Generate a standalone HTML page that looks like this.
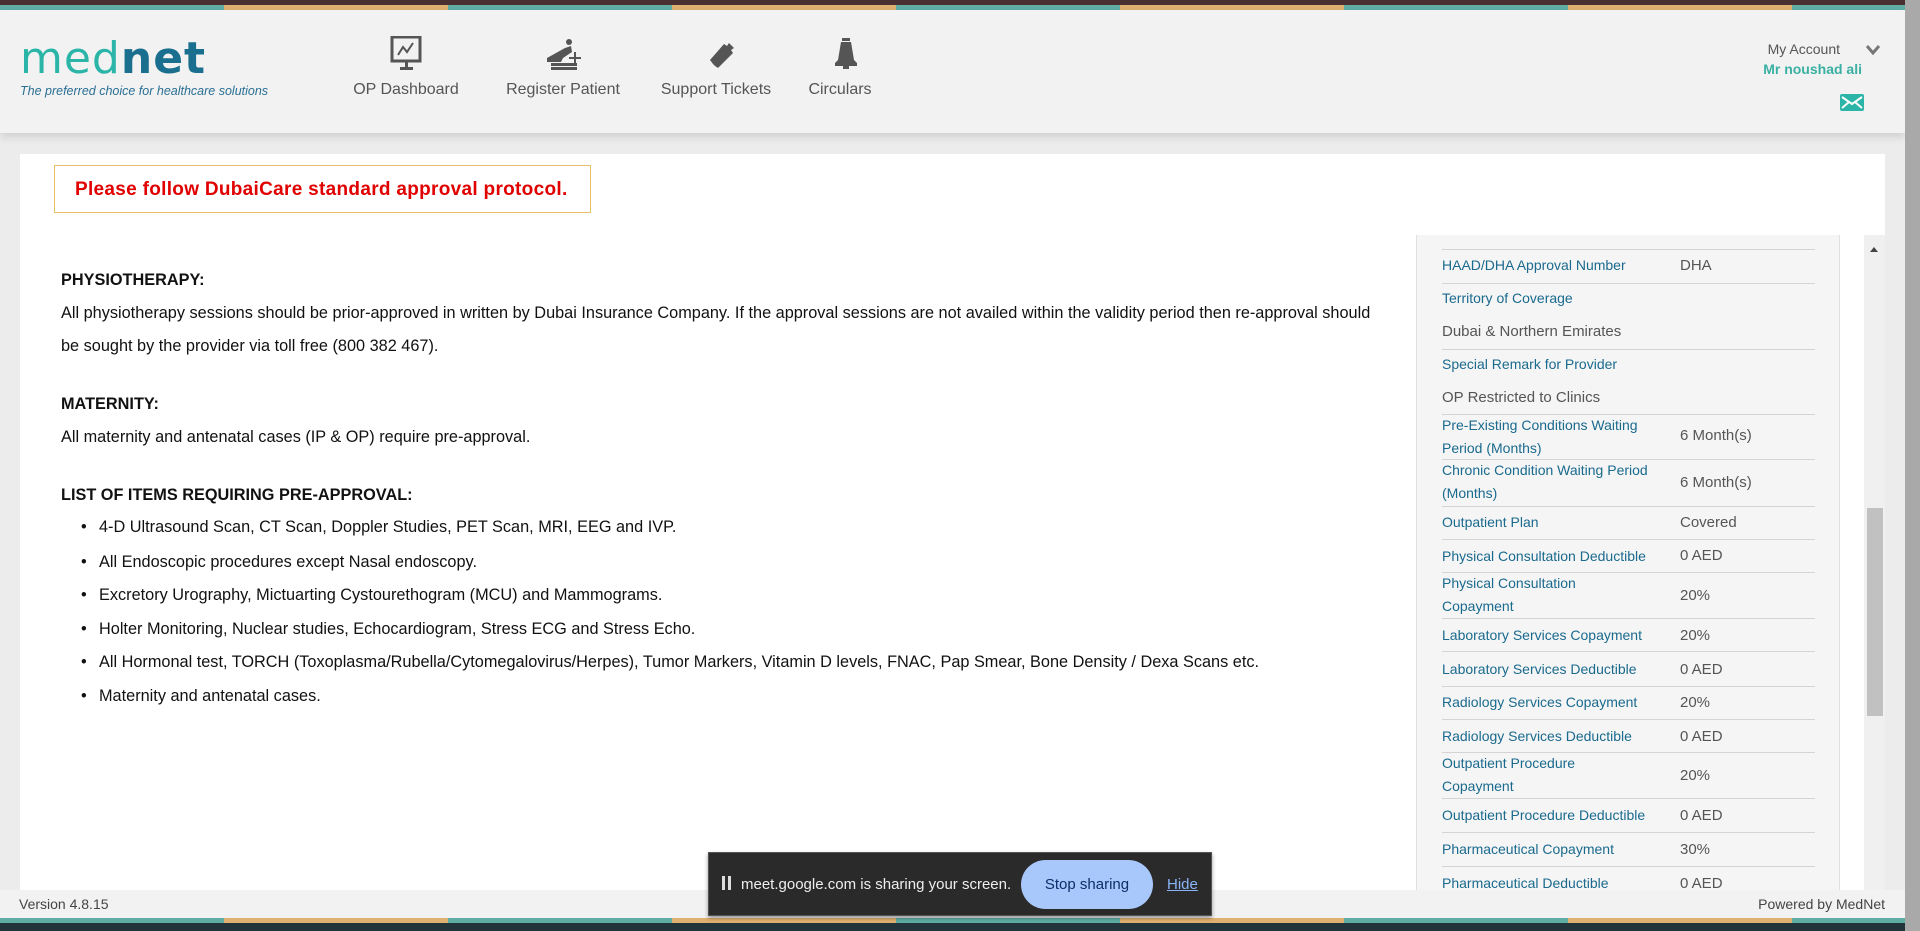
<!DOCTYPE html>
<html><head><meta charset="utf-8"><style>
*{margin:0;padding:0;box-sizing:border-box}
body{width:1920px;height:931px;overflow:hidden;background:#ececec;font-family:"Liberation Sans",Arial,sans-serif;position:relative}
.a{position:absolute;white-space:nowrap}
.stripe{position:absolute;left:0;width:1905px;height:5px;background:repeating-linear-gradient(90deg,#5fada5 0 224px,#e0b070 224px 448px)}
.nav{position:absolute;top:81px;font-size:16px;color:#555;transform:translateX(-50%)}
.ct{font-size:16.3px;color:#111}
.lb{position:absolute;left:1442px;font-size:14px;color:#1a6a8e;line-height:23px}
.vl{position:absolute;left:1680px;font-size:15px;color:#555}
.sep{position:absolute;left:1442px;width:373px;height:1px;background:#d4d4d4}
</style></head><body>
<div class="a" style="left:0;top:0;width:1920px;height:5px;background:#4a3030"></div>
<div class="stripe" style="top:5px"></div>
<div class="a" style="left:0;top:10px;width:1905px;height:123px;background:#f2f2f2;box-shadow:0 4px 8px rgba(0,0,0,.12)"></div>
<div class="a" style="left:1905px;top:0;width:15px;height:931px;background:#a9a9a9"></div>

<div class="a" style="left:20px;top:34px;font-size:44px;letter-spacing:1px;font-family:'DejaVu Sans',sans-serif;line-height:50px"><span style="color:#2bb5a8">med</span><span style="color:#1a6e8e;font-weight:bold">net</span></div>
<div class="a" style="left:20px;top:84px;font-size:12.5px;font-style:italic;color:#2a6f94">The preferred choice for healthcare solutions</div>

<svg class="a" style="left:390px;top:36px" width="34" height="36" viewBox="0 0 34 36"><rect x="2" y="1" width="28" height="24" fill="none" stroke="#555" stroke-width="3"/><polyline points="8,19 13,11 17,16 23,7" fill="none" stroke="#555" stroke-width="2"/><rect x="15" y="25" width="3" height="7" fill="#555"/><rect x="10" y="31" width="13" height="3" fill="#555"/></svg>
<svg class="a" style="left:545px;top:38px" width="40" height="34" viewBox="0 0 40 34"><circle cx="24" cy="4" r="3" fill="#555"/><path d="M2 20 L20 10 L26 8 L27 14 L18 20 L16 24 L2 24 Z" fill="#555"/><rect x="6" y="25" width="26" height="3" fill="#555"/><rect x="6" y="29" width="26" height="3" fill="#555"/><path d="M30 14v12M24 20h12" stroke="#555" stroke-width="2"/></svg>
<svg class="a" style="left:707px;top:38px" width="32" height="32" viewBox="0 0 32 32"><path d="M3 22 L17 6 L20 8 L22 5 L27 10 L24 12 L26 15 L11 30 L8 28 L6 26 Z" fill="#555"/></svg>
<svg class="a" style="left:833px;top:38px" width="26" height="32" viewBox="0 0 26 32"><rect x="9" y="0" width="8" height="3" fill="#555"/><path d="M8 4 h10 l3 18 l3 3 v3 h-22 v-3 l3 -3 z" fill="#555"/><rect x="10" y="28" width="6" height="3" fill="#555"/></svg>

<div class="nav" style="left:406px">OP Dashboard</div>
<div class="nav" style="left:563px">Register Patient</div>
<div class="nav" style="left:716px">Support Tickets</div>
<div class="nav" style="left:840px">Circulars</div>

<div class="a" style="right:80px;top:41px;font-size:14px;color:#555">My Account</div>
<svg class="a" style="left:1866px;top:44px" width="14" height="12" viewBox="0 0 14 12"><path d="M1 2 L7 9 L13 2" fill="none" stroke="#777" stroke-width="3"/></svg>
<div class="a" style="right:58px;top:61px;font-size:14px;font-weight:bold;color:#3ab0a2">Mr noushad ali</div>
<svg class="a" style="left:1840px;top:94px" width="24" height="17" viewBox="0 0 24 17"><rect width="24" height="17" rx="2" fill="#2bb5a8"/><path d="M2 3 L12 10 L22 3 M2 14 L9 8 M22 14 L15 8" stroke="#fff" stroke-width="2" fill="none"/></svg>

<div class="a" style="left:20px;top:154px;width:1865px;height:736px;background:#fff"></div>
<div class="a" style="left:54px;top:165px;width:537px;height:48px;border:1px solid #e8c06a;background:#fff"></div>
<div class="a" style="left:75px;top:179px;font-size:19px;font-weight:bold;color:#e00000;font-family:'Liberation Sans Narrow','Liberation Sans',sans-serif;letter-spacing:0.3px">Please follow DubaiCare standard approval protocol.</div>

<div class="a ct" style="left:61px;top:271px;font-weight:bold">PHYSIOTHERAPY:</div>
<div class="a ct" style="left:61px;top:304px">All physiotherapy sessions should be prior-approved in written by Dubai Insurance Company. If the approval sessions are not availed within the validity period then re-approval should</div>
<div class="a ct" style="left:61px;top:337px">be sought by the provider via toll free (800 382 467).</div>
<div class="a ct" style="left:61px;top:395px;font-weight:bold">MATERNITY:</div>
<div class="a ct" style="left:61px;top:428px">All maternity and antenatal cases (IP &amp; OP) require pre-approval.</div>
<div class="a ct" style="left:61px;top:486px;font-weight:bold">LIST OF ITEMS REQUIRING PRE-APPROVAL:</div>
<div class="a ct" style="left:81px;top:518px">•</div><div class="a ct" style="left:99px;top:518px">4-D Ultrasound Scan, CT Scan, Doppler Studies, PET Scan, MRI, EEG and IVP.</div>
<div class="a ct" style="left:81px;top:553px">•</div><div class="a ct" style="left:99px;top:553px">All Endoscopic procedures except Nasal endoscopy.</div>
<div class="a ct" style="left:81px;top:586px">•</div><div class="a ct" style="left:99px;top:586px">Excretory Urography, Mictuarting Cystourethogram (MCU) and Mammograms.</div>
<div class="a ct" style="left:81px;top:620px">•</div><div class="a ct" style="left:99px;top:620px">Holter Monitoring, Nuclear studies, Echocardiogram, Stress ECG and Stress Echo.</div>
<div class="a ct" style="left:81px;top:653px">•</div><div class="a ct" style="left:99px;top:653px">All Hormonal test, TORCH (Toxoplasma/Rubella/Cytomegalovirus/Herpes), Tumor Markers, Vitamin D levels, FNAC, Pap Smear, Bone Density / Dexa Scans etc.</div>
<div class="a ct" style="left:81px;top:687px">•</div><div class="a ct" style="left:99px;top:687px">Maternity and antenatal cases.</div>

<div class="a" style="left:1416px;top:235px;width:424px;height:660px;background:#f5f5f5;border-left:1px solid #e0e0e0;border-right:1px solid #e0e0e0;overflow:hidden">
</div>
<div class="a" style="left:1417px;top:235px;width:422px;height:655px;overflow:hidden">
<div style="position:relative;left:-1417px;top:-235px">
<div class="sep" style="top:249px"></div>
<div class="lb" style="top:254px">HAAD/DHA Approval Number</div><div class="vl" style="top:257px">DHA</div>
<div class="sep" style="top:283px"></div>
<div class="lb" style="top:287px">Territory of Coverage</div>
<div class="vl" style="left:1442px;top:323px">Dubai &amp; Northern Emirates</div>
<div class="sep" style="top:349px"></div>
<div class="lb" style="top:353px">Special Remark for Provider</div>
<div class="vl" style="left:1442px;top:389px">OP Restricted to Clinics</div>
<div class="sep" style="top:414px"></div>
<div class="lb" style="top:414px">Pre-Existing Conditions Waiting<br>Period (Months)</div><div class="vl" style="top:427px">6 Month(s)</div>
<div class="sep" style="top:459px"></div>
<div class="lb" style="top:459px">Chronic Condition Waiting Period<br>(Months)</div><div class="vl" style="top:474px">6 Month(s)</div>
<div class="sep" style="top:506px"></div>
<div class="lb" style="top:511px">Outpatient Plan</div><div class="vl" style="top:514px">Covered</div>
<div class="sep" style="top:539px"></div>
<div class="lb" style="top:545px">Physical Consultation Deductible</div><div class="vl" style="top:547px">0 AED</div>
<div class="sep" style="top:572px"></div>
<div class="lb" style="top:572px">Physical Consultation<br>Copayment</div><div class="vl" style="top:587px">20%</div>
<div class="sep" style="top:618px"></div>
<div class="lb" style="top:624px">Laboratory Services Copayment</div><div class="vl" style="top:627px">20%</div>
<div class="sep" style="top:651px"></div>
<div class="lb" style="top:658px">Laboratory Services Deductible</div><div class="vl" style="top:661px">0 AED</div>
<div class="sep" style="top:686px"></div>
<div class="lb" style="top:691px">Radiology Services Copayment</div><div class="vl" style="top:694px">20%</div>
<div class="sep" style="top:719px"></div>
<div class="lb" style="top:725px">Radiology Services Deductible</div><div class="vl" style="top:728px">0 AED</div>
<div class="sep" style="top:752px"></div>
<div class="lb" style="top:752px">Outpatient Procedure<br>Copayment</div><div class="vl" style="top:767px">20%</div>
<div class="sep" style="top:798px"></div>
<div class="lb" style="top:804px">Outpatient Procedure Deductible</div><div class="vl" style="top:807px">0 AED</div>
<div class="sep" style="top:832px"></div>
<div class="lb" style="top:838px">Pharmaceutical Copayment</div><div class="vl" style="top:841px">30%</div>
<div class="sep" style="top:866px"></div>
<div class="lb" style="top:872px">Pharmaceutical Deductible</div><div class="vl" style="top:875px">0 AED</div>
</div></div>

<div class="a" style="left:1864px;top:235px;width:21px;height:655px;background:#f0f0f0"></div>
<svg class="a" style="left:1868px;top:245px" width="12" height="8" viewBox="0 0 12 8"><path d="M2 7 L6 2 L10 7Z" fill="#444"/></svg>
<div class="a" style="left:1867px;top:508px;width:16px;height:208px;background:#c1c1c1"></div>

<div class="a" style="left:0;top:890px;width:1905px;height:28px;background:#f2f2f2"></div>
<div class="a" style="left:19px;top:896px;font-size:14px;color:#444">Version 4.8.15</div>
<div class="a" style="right:35px;top:896px;font-size:14px;color:#444">Powered by MedNet</div>
<div class="stripe" style="top:918px"></div>
<div class="a" style="left:0;top:923px;width:1905px;height:8px;background:#23333a"></div>

<div class="a" style="left:708px;top:852px;width:504px;height:64px;background:#2a2a2a;border:1px solid #555;box-shadow:0 2px 4px rgba(0,0,0,.4)"></div>
<div class="a" style="left:722px;top:876px;width:3px;height:14px;background:#ddd"></div>
<div class="a" style="left:728px;top:876px;width:3px;height:14px;background:#ddd"></div>
<div class="a" style="left:741px;top:876px;font-size:15px;color:#eee">meet.google.com is sharing your screen.</div>
<div class="a" style="left:1021px;top:860px;width:132px;height:49px;border-radius:25px;background:#a8c7fa;color:#0b2f6b;font-size:15px;text-align:center;line-height:49px">Stop sharing</div>
<div class="a" style="left:1167px;top:876px;font-size:15px;color:#8ab4f8;text-decoration:underline">Hide</div>
</body></html>
